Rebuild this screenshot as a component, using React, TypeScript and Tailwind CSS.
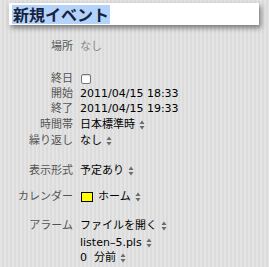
import React from "react";

const Stepper = () => (
  <svg width="6" height="10" viewBox="0 0 6 10" className="ml-[4px] shrink-0">
    <path d="M3 0.5 L5.5 4 L0.5 4 Z" fill="#6b6b6b" />
    <path d="M3 9.5 L5.5 6 L0.5 6 Z" fill="#6b6b6b" />
  </svg>
);

const Row = ({ label, children, cls }: { label?: string; children: React.ReactNode; cls: string }) => (
  <div className={`flex items-center h-[15px] ${cls}`}>
    <div className="w-[73px] text-right text-[#555555] shrink-0 whitespace-nowrap">{label}</div>
    <div className="ml-[7px] flex items-center whitespace-nowrap text-black">{children}</div>
  </div>
);

export default function App() {
  return (
    <div
      className="w-[269px] h-[267px] overflow-hidden bg-[repeating-linear-gradient(90deg,#e4e4e4_0px,#e4e4e4_2px,#dcdcdc_2px,#dcdcdc_4px)] text-[11px] leading-[15px]"
      style={{ fontFamily: '"DejaVu Sans", "Noto Sans CJK JP", sans-serif' }}
    >
      <div className="pt-[3px] pl-[9px]">
        <div className="w-[250px] h-[22px] bg-white shadow-[2px_3px_5px_rgba(0,0,0,0.45)] flex items-center pl-[3px]">
          <span
            className="bg-[#b4d3fb] text-[#17223d] font-bold text-[16px] leading-[19px] px-[1px]"
            style={{ fontFamily: '"Noto Sans CJK JP", sans-serif' }}
          >
            新規イベント
          </span>
        </div>
      </div>
      <Row label="場所" cls="mt-[14px]">
        <span className="text-[#8a8a8a]">なし</span>
      </Row>
      <Row label="終日" cls="mt-[17px]">
        <span className="ml-[1px] w-[10px] h-[10px] rounded-[2px] border border-[#777] bg-white shadow-[inset_0_1px_1px_rgba(0,0,0,0.15)]" />
      </Row>
      <Row label="開始" cls="mt-0">
        2011/04/15 18:33
      </Row>
      <Row label="終了" cls="mt-0">
        2011/04/15 19:33
      </Row>
      <Row label="時間帯" cls="mt-[1px]">
        日本標準時
        <Stepper />
      </Row>
      <Row label="繰り返し" cls="mt-[1px]">
        なし
        <Stepper />
      </Row>
      <Row label="表示形式" cls="mt-[15px]">
        予定あり
        <Stepper />
      </Row>
      <Row label="カレンダー" cls="mt-[11px]">
        <span className="ml-[1px] w-[12px] h-[10px] bg-[#ffff00] border border-black mr-[5px]" />
        ホーム
        <Stepper />
      </Row>
      <Row label="アラーム" cls="mt-[14px]">
        ファイルを開く
        <Stepper />
      </Row>
      <Row cls="mt-[2px]">
        listen–5.pls
        <Stepper />
      </Row>
      <Row cls="mt-0">
        0&nbsp;&nbsp;分前
        <Stepper />
      </Row>
    </div>
  );
}
